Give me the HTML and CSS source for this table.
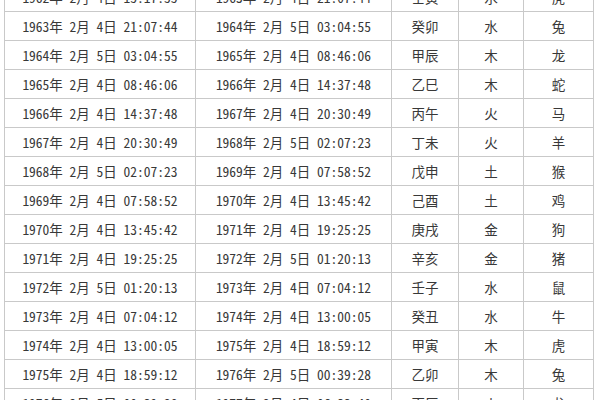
FILE: index.html
```html
<!DOCTYPE html>
<html lang="zh-CN">
<head>
<meta charset="utf-8">
<title>立春时间表</title>
<link rel="stylesheet" href="styles.css">
</head>
<body>
<table class="chart">
  <colgroup>
    <col class="c-start"><col class="c-end"><col class="c-gz"><col class="c-el"><col class="c-zo">
  </colgroup>
  <tbody>
    <tr><td>1962年 2月 4日 15:17:55</td><td>1963年 2月 4日 21:07:44</td><td>壬寅</td><td>水</td><td>虎</td></tr>
    <tr><td>1963年 2月 4日 21:07:44</td><td>1964年 2月 5日 03:04:55</td><td>癸卯</td><td>水</td><td>兔</td></tr>
    <tr><td>1964年 2月 5日 03:04:55</td><td>1965年 2月 4日 08:46:06</td><td>甲辰</td><td>木</td><td>龙</td></tr>
    <tr><td>1965年 2月 4日 08:46:06</td><td>1966年 2月 4日 14:37:48</td><td>乙巳</td><td>木</td><td>蛇</td></tr>
    <tr><td>1966年 2月 4日 14:37:48</td><td>1967年 2月 4日 20:30:49</td><td>丙午</td><td>火</td><td>马</td></tr>
    <tr><td>1967年 2月 4日 20:30:49</td><td>1968年 2月 5日 02:07:23</td><td>丁未</td><td>火</td><td>羊</td></tr>
    <tr><td>1968年 2月 5日 02:07:23</td><td>1969年 2月 4日 07:58:52</td><td>戊申</td><td>土</td><td>猴</td></tr>
    <tr><td>1969年 2月 4日 07:58:52</td><td>1970年 2月 4日 13:45:42</td><td>己酉</td><td>土</td><td>鸡</td></tr>
    <tr><td>1970年 2月 4日 13:45:42</td><td>1971年 2月 4日 19:25:25</td><td>庚戌</td><td>金</td><td>狗</td></tr>
    <tr><td>1971年 2月 4日 19:25:25</td><td>1972年 2月 5日 01:20:13</td><td>辛亥</td><td>金</td><td>猪</td></tr>
    <tr><td>1972年 2月 5日 01:20:13</td><td>1973年 2月 4日 07:04:12</td><td>壬子</td><td>水</td><td>鼠</td></tr>
    <tr><td>1973年 2月 4日 07:04:12</td><td>1974年 2月 4日 13:00:05</td><td>癸丑</td><td>水</td><td>牛</td></tr>
    <tr><td>1974年 2月 4日 13:00:05</td><td>1975年 2月 4日 18:59:12</td><td>甲寅</td><td>木</td><td>虎</td></tr>
    <tr><td>1975年 2月 4日 18:59:12</td><td>1976年 2月 5日 00:39:28</td><td>乙卯</td><td>木</td><td>兔</td></tr>
    <tr><td>1976年 2月 5日 00:39:28</td><td>1977年 2月 4日 06:33:40</td><td>丙辰</td><td>火</td><td>龙</td></tr>
  </tbody>
</table>
</body>
</html>
```
FILE: styles.css
```css
html, body {
  margin: 0;
  padding: 0;
  background: #ffffff;
  overflow: hidden;
}
.chart {
  border-collapse: collapse;
  table-layout: fixed;
  margin: -18px 0 0 4px;
  font-family: "Noto Sans CJK SC", "Noto Sans", sans-serif;
  font-feature-settings: "hwid" 1;
  font-size: 13.5px;
  color: #383838;
}
.c-start { width: 191px; }
.c-end { width: 196px; }
.c-gz { width: 67px; }
.c-el { width: 65px; }
.c-zo { width: 70px; }
.chart td {
  border: 1px solid #c9c9c9;
  height: 28px;
  padding: 0;
  text-align: center;
  vertical-align: middle;
  white-space: nowrap;
  line-height: 16px;
}
```
